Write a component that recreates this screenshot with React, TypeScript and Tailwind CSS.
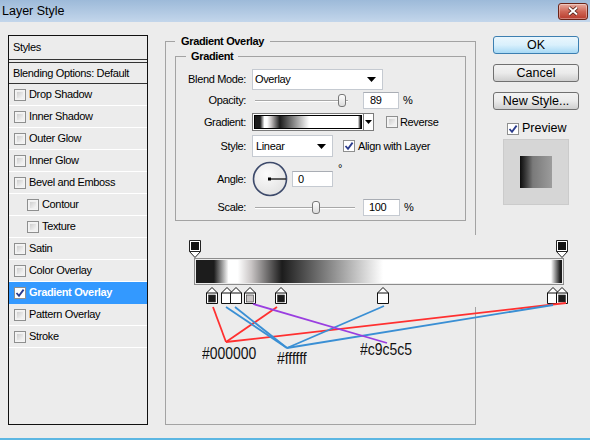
import React from 'react'

const LAYER_STYLES = [
  { label: 'Drop Shadow' },
  { label: 'Inner Shadow' },
  { label: 'Outer Glow' },
  { label: 'Inner Glow' },
  { label: 'Bevel and Emboss' },
  { label: 'Contour', indent: true },
  { label: 'Texture', indent: true },
  { label: 'Satin' },
  { label: 'Color Overlay' },
  { label: 'Gradient Overlay', active: true },
  { label: 'Pattern Overlay' },
  { label: 'Stroke' },
]

// colour stops, px from the left edge of the 370px bar
const BAR_W = 370
const STOPS = [
  { at: 18, color: '#1c1c1c' },
  { at: 33, color: '#ffffff' },
  { at: 42, color: '#ffffff' },
  { at: 56, color: '#c9c5c5' },
  { at: 87, color: '#1c1c1c' },
  { at: 189, color: '#ffffff' },
  { at: 359, color: '#ffffff' },
  { at: 368, color: '#1c1c1c' },
]
const GRADIENT = `linear-gradient(to right, ${STOPS.map(s => `${s.color} ${((s.at / BAR_W) * 100).toFixed(1)}%`).join(', ')})`

// annotation lines, relative to the editor box
const LINES = [
  { c: '#ff3030', d: [28, 72, 41, 107] },
  { c: '#ff3030', d: [41, 107, 92, 72] },
  { c: '#ff3030', d: [41, 107, 381, 68] },
  { c: '#3a8fd4', d: [41, 72, 102, 113] },
  { c: '#3a8fd4', d: [50, 72, 102, 113] },
  { c: '#3a8fd4', d: [102, 113, 199, 71] },
  { c: '#3a8fd4', d: [102, 113, 368, 70] },
  { c: '#9a3ee0', d: [68, 69, 202, 108] },
]

function CheckBox({ checked = false }: { checked?: boolean }) {
  return (
    <span className="flex h-[12px] w-[12px] shrink-0 items-center justify-center border border-[#8e8f8f] bg-[#f4f4f4]">
      <span
        className={
          checked
            ? 'flex h-[10px] w-[10px] items-center justify-center bg-white'
            : 'h-[8px] w-[8px] border border-[#f0f0f0] bg-gradient-to-br from-[#cfcfcf] to-[#f6f6f6]'
        }
      >
        {checked && (
          <svg width="10" height="10" viewBox="0 0 10 10">
            <path d="M1.5 5 L4 7.8 L8.6 1.6" fill="none" stroke="#2a3b8c" strokeWidth="1.8" />
          </svg>
        )}
      </span>
    </span>
  )
}

function Arrow() {
  return (
    <svg width="9" height="5" viewBox="0 0 9 5">
      <path d="M0 0 H9 L4.5 5 Z" fill="#000" />
    </svg>
  )
}

function Field({ value, className }: { value: string; className: string }) {
  return (
    <div className={'flex items-center border border-[#c5cad1] border-t-[#a9adb4] bg-white pl-[4px] ' + className}>
      {value}
    </div>
  )
}

function Slider({ className, thumb }: { className: string; thumb: string }) {
  return (
    <div className={'relative h-[16px] ' + className}>
      <div className="absolute left-0 right-0 top-[7px] h-[2px] border-t border-[#a8a8a8] bg-white" />
      <div className={'absolute top-[1px] h-[13px] w-[8px] rounded-[3px] border border-[#777] bg-gradient-to-b from-[#fdfdfd] to-[#dcdcdc] ' + thumb} />
    </div>
  )
}

function Label({ children }: { children: React.ReactNode }) {
  return <span className="flex w-[60px] shrink-0 justify-end whitespace-nowrap">{children}</span>
}

function TopStop({ left }: { left: string }) {
  return (
    <svg className={'absolute top-0 ' + left} width="12" height="18" viewBox="0 0 12 18">
      <path d="M0.5 0.5 H11.5 V11.5 L6 17.5 L0.5 11.5 Z" fill="#fff" stroke="#222" />
      <rect x="2" y="2" width="8" height="8" fill="#111" />
      <path d="M0.5 11.5 H11.5" stroke="#222" />
    </svg>
  )
}

function BottomStop({ at, color }: { at: number; color: string }) {
  return (
    <svg className="absolute top-0" style={{ left: at - 6 }} width="12" height="17" viewBox="0 0 12 17">
      <path d="M6 0.5 L11.5 6 V16.5 H0.5 V6 Z" fill="#fff" stroke="#111" />
      <path d="M0.5 6 H11.5" stroke="#111" />
      <rect x="2.5" y="8" width="7" height="7" fill={color} stroke={color === '#ffffff' ? '#ffffff' : '#333'} strokeWidth="0.6" />
    </svg>
  )
}

const NOTE = "absolute origin-top-left scale-x-[0.82] whitespace-nowrap font-['Liberation_Sans',Arial,sans-serif] text-[17px] leading-none tracking-normal text-[#111]"

function GradientEditor() {
  return (
    <div className="relative ml-[10px] mt-[14px] w-[390px] bg-[#ececec] px-[9px] pb-[3px] pt-[5px]">
      <div className="relative h-[18px]">
        <TopStop left="left-[-5px]" />
        <TopStop left="left-[362px]" />
      </div>
      <div className="h-[27px] w-[370px] border border-[#8c8c8c] p-[1px]">
        <div className="h-full w-full" style={{ background: GRADIENT }} />
      </div>
      <div className="relative mt-[2px] h-[17px]">
        {STOPS.map(s => (
          <BottomStop key={s.at} at={s.at} color={s.color} />
        ))}
      </div>

      {/* annotations */}
      <svg className="pointer-events-none absolute left-0 top-0 overflow-visible" width="400" height="140">
        {LINES.map((l, i) => (
          <line key={i} x1={l.d[0]} y1={l.d[1]} x2={l.d[2]} y2={l.d[3]} stroke={l.c} strokeWidth="1.8" />
        ))}
      </svg>
      <span className={NOTE + ' left-[17px] top-[110px]'}>#000000</span>
      <span className={NOTE + ' left-[92px] top-[115px]'}>#ffffff</span>
      <span className={NOTE + ' left-[175px] top-[106px]'}>#c9c5c5</span>
    </div>
  )
}

function LeftPanel() {
  return (
    <div className="flex h-[390px] w-[140px] shrink-0 flex-col border border-[#111]">
      <div className="flex h-[24px] items-center border-b border-[#333] pl-[4px]">Styles</div>
      <div className="h-[2px]" />
      <div className="flex h-[22px] items-center border-y border-[#333] pl-[4px]">Blending Options: Default</div>
      {LAYER_STYLES.map(s => (
        <div
          key={s.label}
          className={
            'flex h-[22px] items-center border-b ' +
            (s.active ? 'border-[#3399ff] bg-[#3399ff] font-bold text-white ' : 'border-white ') +
            (s.indent ? 'pl-[18px]' : 'pl-[5px]')
          }
        >
          <CheckBox checked={s.active} />
          <span className="ml-[3px]">{s.label}</span>
        </div>
      ))}
    </div>
  )
}

function MainPanel() {
  return (
    <fieldset className="h-[390px] w-[311px] min-w-0 shrink-0 border border-[#a3a3a3] px-[9px]">
      <legend className="px-[6px] font-bold leading-[13px]">Gradient Overlay</legend>
      <fieldset className="mt-[2px] min-w-0 border border-[#a3a3a3] pb-[4px] pl-[10px]">
        <legend className="px-[5px] font-bold leading-[13px]">Gradient</legend>

        <div className="mt-[6px] flex h-[21px] items-center">
          <Label>Blend Mode:</Label>
          <div className="ml-[6px] flex h-[21px] w-[131px] items-center justify-between border border-[#c5cad1] bg-white pl-[2px] pr-[6px]">
            <span>Overlay</span>
            <Arrow />
          </div>
        </div>

        <div className="mt-[2px] flex h-[17px] items-center">
          <Label>Opacity:</Label>
          <Slider className="ml-[9px] w-[93px]" thumb="left-[83px]" />
          <Field value="89" className="ml-[15px] h-[17px] w-[36px] pl-[6px]" />
          <span className="ml-[4px]">%</span>
        </div>

        <div className="mt-[4px] flex h-[18px] items-center">
          <Label>Gradient:</Label>
          <div className="ml-[6px] flex h-[18px] w-[122px] border border-[#7a7a7a] bg-white">
            <div className="m-[1px] flex-1 border border-black" style={{ background: GRADIENT }} />
            <div className="flex w-[10px] items-center justify-center border-l border-[#7a7a7a]">
              <svg width="7" height="4" viewBox="0 0 7 4">
                <path d="M0 0 H7 L3.5 4 Z" fill="#000" />
              </svg>
            </div>
          </div>
          <span className="ml-[12px]">
            <CheckBox />
          </span>
          <span className="ml-[2px]">Reverse</span>
        </div>

        <div className="mt-[4px] flex h-[22px] items-center">
          <Label>Style:</Label>
          <div className="ml-[6px] flex h-[22px] w-[81px] items-center justify-between border border-[#c5cad1] bg-white pl-[3px] pr-[6px]">
            <span>Linear</span>
            <Arrow />
          </div>
          <span className="ml-[10px]">
            <CheckBox checked />
          </span>
          <span className="ml-[3px] whitespace-nowrap">Align with Layer</span>
        </div>

        <div className="mt-[4px] flex h-[36px] items-center">
          <Label>Angle:</Label>
          <svg className="ml-[6px]" width="36" height="36" viewBox="0 0 36 36">
            <defs>
              <radialGradient id="dial" cx="0.4" cy="0.35" r="0.7">
                <stop offset="0" stopColor="#fbfbfb" />
                <stop offset="1" stopColor="#e2e2e2" />
              </radialGradient>
            </defs>
            <circle cx="18" cy="18" r="16.5" fill="url(#dial)" stroke="#3d4a6b" strokeWidth="1.6" />
            <line x1="18" y1="18" x2="34" y2="18" stroke="#000" strokeWidth="1.2" />
            <rect x="16" y="16.5" width="3" height="3" fill="#000" />
          </svg>
          <Field value="0" className="ml-[4px] h-[16px] w-[41px] pl-[5px]" />
          <span className="ml-[5px] self-start leading-[14px]">°</span>
        </div>

        <div className="mt-[2px] flex h-[17px] items-center">
          <Label>Scale:</Label>
          <Slider className="ml-[9px] w-[100px]" thumb="left-[57px]" />
          <Field value="100" className="ml-[8px] h-[17px] w-[37px] pl-[5px]" />
          <span className="ml-[4px]">%</span>
        </div>
      </fieldset>

      <GradientEditor />
    </fieldset>
  )
}

function Button({ children, primary = false }: { children: React.ReactNode; primary?: boolean }) {
  return (
    <div
      className={
        'flex h-[18px] w-[86px] items-center justify-center rounded-[3px] border text-[12.5px] tracking-normal ' +
        (primary
          ? 'border-[#3c7fb1] bg-gradient-to-b from-[#eaf6fd] via-[#d9f0fc] to-[#a7d9f5]'
          : 'border-[#707070] bg-gradient-to-b from-[#f2f2f2] via-[#ebebeb] to-[#cfcfcf]')
      }
    >
      {children}
    </div>
  )
}

function RightColumn() {
  return (
    <div className="ml-[17px] flex w-[86px] shrink-0 flex-col">
      <div className="mt-[1px]">
        <Button primary>OK</Button>
      </div>
      <div className="mt-[10px]">
        <Button>Cancel</Button>
      </div>
      <div className="mt-[10px]">
        <Button>New Style...</Button>
      </div>
      <div className="mt-[12px] flex h-[13px] items-center pl-[14px] text-[12.5px] tracking-normal">
        <CheckBox checked />
        <span className="ml-[3px]">Preview</span>
      </div>
      <div className="ml-[10px] mt-[4px] flex h-[66px] w-[66px] items-center justify-center border border-[#cbcbcb] bg-[#d6d6d6]">
        <div className="h-[32px] w-[32px] bg-gradient-to-r from-[#0d0d0d] via-[#7a7a7a] via-40% to-[#9c9c9c]" />
      </div>
    </div>
  )
}

export default function App() {
  return (
    <div className="flex h-[440px] w-[590px] flex-col overflow-hidden bg-[#ececec] font-['Liberation_Sans',Arial,sans-serif] text-[11px] tracking-[-0.35px] text-black">
      {/* title bar */}
      <div className="flex h-[22px] shrink-0 items-center justify-between bg-gradient-to-b from-[#9dbad9] to-[#c3d6eb] pl-[2px] pr-[2px]">
        <span className="text-[12.5px] tracking-normal">Layer Style</span>
        <div className="flex h-[17px] w-[30px] items-center justify-center rounded-[3px] border border-[#6b2418] bg-gradient-to-b from-[#e6ada2] via-[#cf6656] to-[#b83a2c] shadow-[inset_0_0_0_1px_rgba(255,255,255,0.35)]">
          <svg width="12" height="10" viewBox="0 0 12 10">
            <path d="M2 1.5 L10 8.5 M10 1.5 L2 8.5" stroke="#4a1810" strokeWidth="3.6" />
            <path d="M2 1.5 L10 8.5 M10 1.5 L2 8.5" stroke="#fff" strokeWidth="2" />
          </svg>
        </div>
      </div>

      <div className="flex flex-1 pl-[8px] pt-[13px]">
        <LeftPanel />
        <div className="ml-[17px] shrink-0">
          <MainPanel />
        </div>
        <RightColumn />
      </div>

      <div className="h-[2px] shrink-0 bg-[#5cb6e2]" />
    </div>
  )
}
